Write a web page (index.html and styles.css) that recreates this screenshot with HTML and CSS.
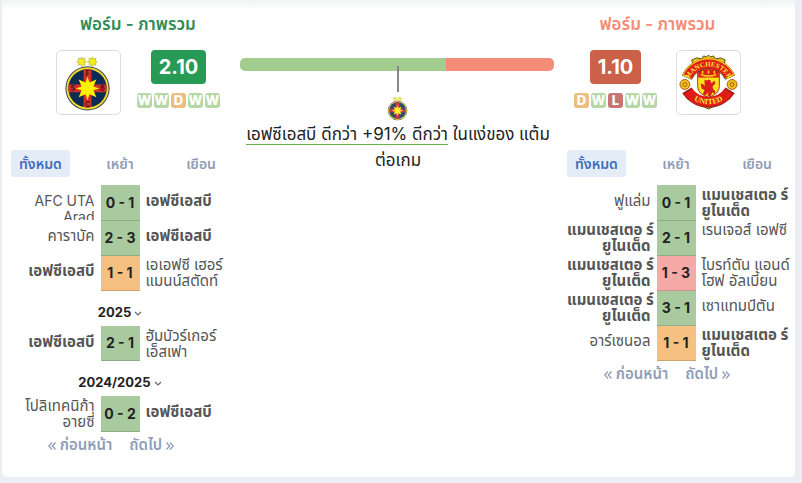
FILE: index.html
```html
<!DOCTYPE html>
<html lang="th">
<head>
    <meta charset="UTF-8">
    <meta name="viewport" content="width=device-width, initial-scale=1.0">
    <title>ฟอร์ม - ภาพรวม</title>
    <link rel="stylesheet" href="styles.css">
</head>
<body>
    <svg class="defs" aria-hidden="true">
        <symbol id="fcsb" viewBox="0 0 60 60">
            <g fill="#f6ec1b" stroke="#a8a832" stroke-width=".6">
                <path d="M23 4l1.2 2.1 2.3-.7-.7 2.3 2.1 1.3-2.1 1.2.7 2.3-2.3-.7L23 14l-1.2-2.2-2.3.7.7-2.3L18 9l2.2-1.3-.7-2.3 2.3.7z"/>
                <path d="M34 4l1.2 2.1 2.3-.7-.7 2.3 2.1 1.3-2.1 1.2.7 2.3-2.3-.7L34 14l-1.2-2.2-2.3.7.7-2.3L29 9l2.2-1.3-.7-2.3 2.3.7z"/>
            </g>
            <circle cx="29" cy="36" r="22.5" fill="#33445a"/>
            <circle cx="29" cy="36" r="21.5" fill="#f2dc22"/>
            <circle cx="29" cy="36" r="19.5" fill="#0d2b55"/>
            <path d="M25 17a19.5 19.5 0 0 1 8 0v15h15a19.5 19.5 0 0 1 0 8H33v15a19.5 19.5 0 0 1-8 0V40H10a19.5 19.5 0 0 1 0-8h15z" fill="#d92d27"/>
            <path d="M29 24l2 6 7-3-3 7 6 2-6 2 3 7-7-3-2 6-2-6-7 3 3-7-6-2 6-2-3-7 7 3z" fill="#fff200"/>
            <g class="crest-letters" fill="#3b1b1b">
                <text x="29" y="23">F</text>
                <text x="14" y="39">S</text>
                <text x="44" y="39">B</text>
                <text x="29" y="55">C</text>
            </g>
        </symbol>
        <symbol id="united" viewBox="0 0 60 60">
            <path d="M14 11l-1-4 5-2 5 1 2-3 3 1 2-2 2 2 3-1 2 3 5-1 5 2-1 4-3 4H17zM19 50l3 4 4 1 4 2 4-2 4-1 4-4z" fill="#e8c51c" stroke="#5b4a12"/>
            <path d="M19 16h22v18q0 8-11 11Q19 42 19 34z" fill="#ffe21a" stroke="#b3301a"/>
            <path d="M19.5 16.5h21V25h-21z" fill="#d9201a"/>
            <path d="M22 22q8 3 16 0M24 21v-3M30 21v-3M36 21v-3" fill="none" stroke="#ffd91a" stroke-width="1.5"/>
            <path d="M26 27l2 1 2-1 2 1 1 3 3-3 1 3-3 3 1 3 2 2-1 3-2-2-2 4h-3l1-4-3 3-3-1 2-4-3-2-1-5 3 1 1 2z" fill="#d9201a"/>
            <g fill="none">
                <path d="M8 25A24 24 0 0 1 52 25" stroke="#5b3a12" stroke-width="11"/>
                <path d="M8 24.5A24 24 0 0 1 52 24.5" stroke="#f3c21b" stroke-width="10"/>
                <path d="M9 23.5A24 24 0 0 1 51 23.5" stroke="#e11b17" stroke-width="9"/>
                <path d="M8 38A26 26 0 0 0 52 38" stroke="#8a2012" stroke-width="11"/>
                <path d="M9 39A26 26 0 0 0 51 39" stroke="#e11b17" stroke-width="10"/>
            </g>
            <g fill="#f3c41b" stroke="#a8541a">
                <circle cx="6" cy="32" r="5"/>
                <circle cx="54" cy="32" r="5"/>
                <circle cx="6" cy="32" r="2"/>
                <circle cx="54" cy="32" r="2"/>
            </g>
            <path id="arc-top" d="M9 29A22 22 0 0 1 51 29" fill="none"/>
            <path id="arc-bottom" d="M8 42A29 29 0 0 0 52 42" fill="none"/>
            <g class="crest-name" fill="#ffea3a">
                <text class="small"><textPath href="#arc-top" startOffset="50%">MANCHESTER</textPath></text>
                <text><textPath href="#arc-bottom" startOffset="50%">UNITED</textPath></text>
            </g>
        </symbol>
        <symbol id="chevron" viewBox="0 0 8 6">
            <path d="M1 1l3 3 3-3" fill="none" stroke="currentColor" stroke-width="1.2"/>
        </symbol>
        <symbol id="prev" viewBox="0 0 8 8">
            <path d="M4 .5L.8 4 4 7.5M7.5.5L4.3 4l3.2 3.5" fill="none" stroke="currentColor" stroke-width="1.3"/>
        </symbol>
        <symbol id="next" viewBox="0 0 8 8">
            <path d="M.5.5L3.7 4 .5 7.5M4 .5L7.2 4 4 7.5" fill="none" stroke="currentColor" stroke-width="1.3"/>
        </symbol>
    </svg>

    <main class="panel">
        <section class="team">
            <div class="summary">
                <h2 class="title home">ฟอร์ม - ภาพรวม</h2>
                <div class="overview">
                    <div class="logo"><svg role="img" aria-label="เอฟซีเอสบี"><use href="#fcsb"/></svg></div>
                    <div class="rating">
                        <span class="points home">2.10</span>
                        <div class="form">
                            <span class="w">W</span><span class="w">W</span><span class="d">D</span><span class="w">W</span><span class="w">W</span>
                        </div>
                    </div>
                </div>
            </div>
            <div class="tabs">
                <button class="tab active">ทั้งหมด</button>
                <button class="tab">เหย้า</button>
                <button class="tab">เยือน</button>
            </div>
            <table class="matches">
                <tr>
                    <td class="one"><div class="latin">AFC UTA<br>Arad</div></td>
                    <td class="score win">0 - 1</td>
                    <td class="one"><div><b>เอฟซีเอสบี</b></div></td>
                </tr>
                <tr>
                    <td class="one"><div>คาราบัค</div></td>
                    <td class="score win">2 - 3</td>
                    <td class="one"><div><b>เอฟซีเอสบี</b></div></td>
                </tr>
                <tr>
                    <td class="one"><div><b>เอฟซีเอสบี</b></div></td>
                    <td class="score draw">1 - 1</td>
                    <td><div>เอเอฟซี เฮอร์<br>แมนน์สตัดท์</div></td>
                </tr>
            </table>
            <button class="season">2025 <svg><use href="#chevron"/></svg></button>
            <table class="matches">
                <tr>
                    <td class="one"><div><b>เอฟซีเอสบี</b></div></td>
                    <td class="score win">2 - 1</td>
                    <td><div>ฮัมบัวร์เกอร์<br>เอ็สเฟา</div></td>
                </tr>
            </table>
            <button class="season">2024/2025 <svg><use href="#chevron"/></svg></button>
            <table class="matches">
                <tr>
                    <td><div>โปลิเทคนิก้า<br>อายซี่</div></td>
                    <td class="score win">0 - 2</td>
                    <td class="one"><div><b>เอฟซีเอสบี</b></div></td>
                </tr>
            </table>
            <nav class="pager">
                <a href="#"><svg><use href="#prev"/></svg> ก่อนหน้า</a>
                <a href="#">ถัดไป <svg><use href="#next"/></svg></a>
            </nav>
        </section>

        <section class="compare">
            <div class="bar">
                <div class="bar-home"></div>
                <div class="bar-away"></div>
            </div>
            <div class="marker"></div>
            <svg class="mini-logo"><use href="#fcsb"/></svg>
            <p class="verdict"><span>เอฟซีเอสบี ดีกว่า +91% ดีกว่า</span> ในแง่ของ แต้ม<br>ต่อเกม</p>
        </section>

        <section class="team">
            <div class="summary reverse">
                <h2 class="title away">ฟอร์ม - ภาพรวม</h2>
                <div class="overview">
                    <div class="logo"><svg role="img" aria-label="แมนเชสเตอร์ ยูไนเต็ด"><use href="#united"/></svg></div>
                    <div class="rating">
                        <span class="points away">1.10</span>
                        <div class="form">
                            <span class="d">D</span><span class="w">W</span><span class="l">L</span><span class="w">W</span><span class="w">W</span>
                        </div>
                    </div>
                </div>
            </div>
            <div class="tabs">
                <button class="tab active">ทั้งหมด</button>
                <button class="tab">เหย้า</button>
                <button class="tab">เยือน</button>
            </div>
            <table class="matches">
                <tr>
                    <td class="one"><div>ฟูแล่ม</div></td>
                    <td class="score win">0 - 1</td>
                    <td><div><b>แมนเชสเตอ ร์<br>ยูไนเต็ด</b></div></td>
                </tr>
                <tr>
                    <td><div><b>แมนเชสเตอ ร์<br>ยูไนเต็ด</b></div></td>
                    <td class="score win">2 - 1</td>
                    <td><div>เรนเจอส์ เอฟซี</div></td>
                </tr>
                <tr>
                    <td><div><b>แมนเชสเตอ ร์<br>ยูไนเต็ด</b></div></td>
                    <td class="score loss">1 - 3</td>
                    <td><div>ไบรท์ตัน แอนด์<br>โฮฟ อัลเบี้ยน</div></td>
                </tr>
                <tr>
                    <td><div><b>แมนเชสเตอ ร์<br>ยูไนเต็ด</b></div></td>
                    <td class="score win">3 - 1</td>
                    <td class="one"><div>เซาแทมป์ตัน</div></td>
                </tr>
                <tr>
                    <td class="one"><div>อาร์เซนอล</div></td>
                    <td class="score draw">1 - 1</td>
                    <td><div><b>แมนเชสเตอ ร์<br>ยูไนเต็ด</b></div></td>
                </tr>
            </table>
            <nav class="pager">
                <a href="#"><svg><use href="#prev"/></svg> ก่อนหน้า</a>
                <a href="#">ถัดไป <svg><use href="#next"/></svg></a>
            </nav>
        </section>
    </main>
</body>
</html>
```
FILE: styles.css
```css
* {
    box-sizing: border-box;
}
body {
    margin: 0;
    padding: 0 7px 6px 2px;
    background-color: #ebeff3;
    font-family: Inter, "Noto Sans Thai", Tahoma, sans-serif;
    font-size: 15px;
    color: #222;
}
button {
    border: none;
    background: none;
    font-family: inherit;
    cursor: pointer;
}
.defs {
    display: block;
    width: 0;
    height: 0;
}
.panel {
    display: grid;
    grid-template-columns: 218px 1fr 218px;
    gap: 11px;
    min-height: 477px;
    padding: 12px 10px 0 9px;
    background: linear-gradient(#f1f3f3, white 10px);
    border-radius: 0 0 5px 5px;
}

/* team header */
.summary {
    display: flex;
    flex-direction: column;
    align-items: center;
    padding-left: 36px;
}
.summary.reverse {
    padding: 0 37px 0 0;
}
.title {
    margin: 0;
    font-size: 17px;
    line-height: 24px;
    font-weight: 600;
}
.title.home {
    color: #2f8a55;
}
.title.away {
    color: #f58b76;
}
.overview {
    display: flex;
    gap: 16px;
    margin-top: 14px;
}
.reverse .overview {
    flex-direction: row-reverse;
    gap: 19px;
}
.logo {
    width: 65px;
    height: 65px;
    padding: 2px;
    border: 1px solid #dcdde8;
    border-radius: 5px;
}
.logo svg {
    display: block;
    width: 59px;
    height: 59px;
}
.crest-letters {
    font-size: 7px;
    font-weight: 700;
    text-anchor: middle;
}
.crest-name {
    font-family: "Liberation Serif", serif;
    font-size: 8px;
    font-weight: 700;
    text-anchor: middle;
}
.crest-name .small {
    font-size: 7px;
}
.rating {
    display: flex;
    flex-direction: column;
    align-items: center;
}
.points {
    padding: 0 8px;
    border-radius: 4px;
    color: white;
    font-size: 20px;
    line-height: 34px;
    font-weight: 700;
}
.points.home {
    background-color: #279b56;
}
.points.away {
    background-color: #ca6148;
}
.form {
    display: flex;
    gap: 2px;
    margin-top: 9px;
}
.form span {
    width: 15px;
    border-radius: 3px;
    color: white;
    font-size: 13px;
    line-height: 15px;
    font-weight: 800;
    text-align: center;
}
.form .w {
    background-color: #b5d8a6;
}
.form .d {
    background-color: #ebbe7f;
}
.form .l {
    background-color: #c97474;
}

/* match list */
.tabs {
    display: grid;
    grid-template-columns: 12fr 11fr 7fr;
    justify-items: start;
    margin: 35px 0 8px;
}
.tab {
    padding: 0 8px;
    border-radius: 3px;
    color: #8f9db8;
    font-size: 14px;
    line-height: 27px;
    font-weight: 600;
}
.tab.active {
    background-color: #e4edf7;
    color: #3f6dc0;
}
.matches {
    width: 100%;
    border-collapse: collapse;
    table-layout: fixed;
}
.matches td {
    height: 35px;
    padding: 0;
    vertical-align: top;
    color: #555;
}
.matches td:first-child {
    text-align: right;
}
.matches div {
    height: 35px;
    padding: 2px 0 0 6px;
    line-height: 16px;
    white-space: nowrap;
}
.matches td:first-child div {
    padding-left: 0;
    padding-right: 6px;
}
.matches .one div {
    padding-top: 8px;
}
.matches .latin {
    overflow: hidden;
    font-size: 14px;
}
.matches .score {
    width: 39px;
    border-bottom: 1px solid #8fae87;
    color: #222;
    font-size: 14px;
    font-weight: 700;
    text-align: center;
    vertical-align: middle;
}
.matches .win {
    background-color: #a8ca9e;
}
.matches .draw {
    background-color: #f6c180;
    border-color: #cda26d;
}
.matches .loss {
    background-color: #f6aaa8;
    border-color: #cf9290;
}
.season {
    display: block;
    width: 100%;
    padding: 7px 0 0;
    color: #222;
    font-size: 13px;
    line-height: 28px;
    font-weight: 700;
}
.season svg {
    width: 8px;
    height: 6px;
    color: #666;
}
.pager {
    display: flex;
    justify-content: center;
    gap: 17px;
    padding: 3px 18px 0 0;
}
.pager a {
    color: #8f9db8;
    font-size: 15px;
    line-height: 20px;
    font-weight: 600;
    text-decoration: none;
}
.pager svg {
    width: 8px;
    height: 8px;
}

/* comparison */
.compare {
    display: flex;
    flex-direction: column;
    align-items: center;
    padding-top: 46px;
}
.bar {
    display: flex;
    align-self: stretch;
    height: 13px;
    margin-right: 2px;
    border-radius: 5px;
    overflow: hidden;
}
.bar-home {
    flex: 206;
    background-color: #a2cd8f;
}
.bar-away {
    flex: 108;
    background-color: #f58c77;
}
.marker {
    width: 2px;
    height: 26px;
    margin-top: -5px;
    background-color: #888;
}
.mini-logo {
    width: 26px;
    height: 26px;
    margin-top: 3px;
    opacity: .85;
}
.verdict {
    margin: 0;
    font-size: 17px;
    line-height: 26px;
    white-space: nowrap;
    text-align: center;
}
.verdict span {
    border-bottom: 1px solid #6cb04a;
}
```
